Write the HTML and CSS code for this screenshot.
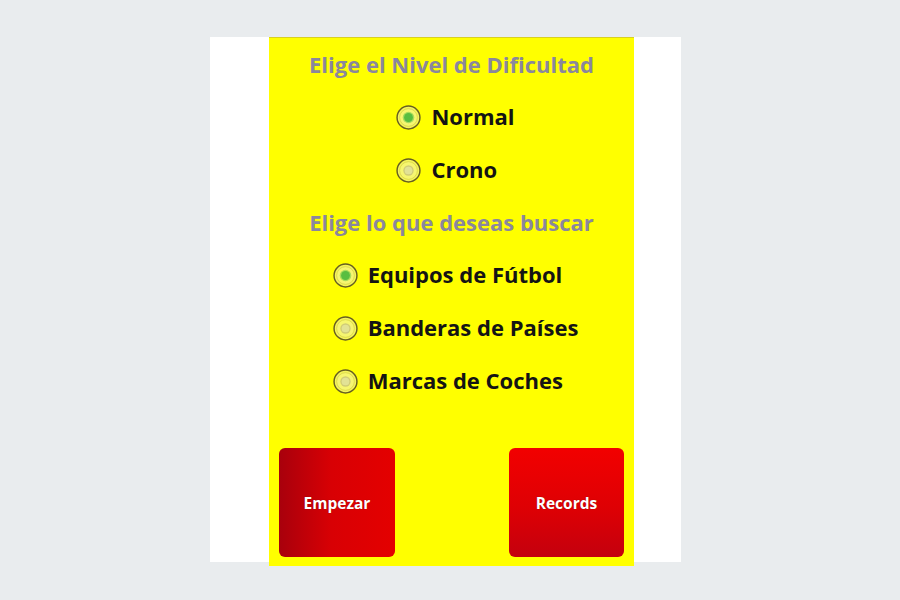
FILE: index.html
```html
<!DOCTYPE html>
<html lang="es">
<head>
<meta charset="utf-8">
<title>Nivel de Dificultad</title>
<link rel="stylesheet" href="styles.css">
</head>
<body>
<div class="panel">
  <div class="screen">
    <div class="heading">Elige el Nivel de Dificultad</div>
    <div class="group">
      <div class="option">
        <svg class="radio" viewBox="0 0 26 26"><circle cx="13" cy="13" r="11.9" fill="#f4f45c" stroke="#665e22" stroke-width="1.5"/><circle cx="13" cy="13" r="9.2" fill="#f6f670" stroke="#d6d248" stroke-width="0.8"/><circle cx="13" cy="13" r="6" fill="#a8dc5c"/><circle cx="13" cy="13" r="4.6" fill="#58be40"/></svg>
        <span class="label">Normal</span>
      </div>
      <div class="option">
        <svg class="radio" viewBox="0 0 26 26"><circle cx="13" cy="13" r="11.9" fill="#f4f45c" stroke="#665e22" stroke-width="1.5"/><circle cx="13" cy="13" r="9.2" fill="#f6f670" stroke="#d6d248" stroke-width="0.8"/><circle cx="13" cy="13" r="5.4" fill="#d0cc78"/><circle cx="13" cy="13" r="4" fill="#e2e296"/></svg>
        <span class="label">Crono</span>
      </div>
    </div>
    <div class="heading">Elige lo que deseas buscar</div>
    <div class="group">
      <div class="option">
        <svg class="radio" viewBox="0 0 26 26"><circle cx="13" cy="13" r="11.9" fill="#f4f45c" stroke="#665e22" stroke-width="1.5"/><circle cx="13" cy="13" r="9.2" fill="#f6f670" stroke="#d6d248" stroke-width="0.8"/><circle cx="13" cy="13" r="6" fill="#a8dc5c"/><circle cx="13" cy="13" r="4.6" fill="#58be40"/></svg>
        <span class="label">Equipos de Fútbol</span>
      </div>
      <div class="option">
        <svg class="radio" viewBox="0 0 26 26"><circle cx="13" cy="13" r="11.9" fill="#f4f45c" stroke="#665e22" stroke-width="1.5"/><circle cx="13" cy="13" r="9.2" fill="#f6f670" stroke="#d6d248" stroke-width="0.8"/><circle cx="13" cy="13" r="5.4" fill="#d0cc78"/><circle cx="13" cy="13" r="4" fill="#e2e296"/></svg>
        <span class="label">Banderas de Países</span>
      </div>
      <div class="option">
        <svg class="radio" viewBox="0 0 26 26"><circle cx="13" cy="13" r="11.9" fill="#f4f45c" stroke="#665e22" stroke-width="1.5"/><circle cx="13" cy="13" r="9.2" fill="#f6f670" stroke="#d6d248" stroke-width="0.8"/><circle cx="13" cy="13" r="5.4" fill="#d0cc78"/><circle cx="13" cy="13" r="4" fill="#e2e296"/></svg>
        <span class="label">Marcas de Coches</span>
      </div>
    </div>
    <div class="buttons">
      <div class="btn btn-start">Empezar</div>
      <div class="btn btn-records">Records</div>
    </div>
  </div>
</div>
</body>
</html>
```
FILE: styles.css
```css
html, body {
  margin: 0;
  padding: 0;
}
body {
  background: #e9ecee;
  width: 900px;
  height: 600px;
  overflow: hidden;
  padding-top: 37px;
  box-sizing: border-box;
  font-family: "Open Sans", "DejaVu Sans", sans-serif;
}
.panel {
  margin-left: 210px;
  width: 471px;
  height: 525px;
  background: #ffffff;
  padding-left: 59px;
  box-sizing: border-box;
}
.screen {
  width: 365px;
  height: 529px;
  background: #ffff00;
  border-top: 1px solid #d8d020;
  box-sizing: border-box;
  display: flex;
  flex-direction: column;
  align-items: center;
  padding-top: 1px;
  padding-bottom: 9px;
}
.heading {
  height: 52px;
  box-sizing: border-box;
  padding-bottom: 2px;
  display: flex;
  align-items: center;
  justify-content: center;
  font-size: 22px;
  font-weight: 700;
  color: #8a879d;
}
.group {
  display: flex;
  flex-direction: column;
  align-items: flex-start;
  margin-left: 8px;
}
.option {
  height: 53px;
  display: flex;
  align-items: center;
  gap: 10px;
}
.radio {
  width: 25px;
  height: 25px;
  display: block;
}
.label {
  font-size: 22px;
  font-weight: 700;
  color: #141414;
  padding-bottom: 3px;
}
.buttons {
  margin-top: auto;
  width: 100%;
  display: flex;
  justify-content: space-between;
  padding: 0 10px;
  box-sizing: border-box;
}
.btn {
  width: 116px;
  height: 109px;
  border-radius: 6px;
  display: flex;
  align-items: center;
  justify-content: center;
  color: #ffffff;
  font-size: 15.5px;
  font-weight: 700;
  text-shadow: 0 0 1px rgba(80,0,0,0.6);
}
.btn-start {
  background: linear-gradient(to right, #a8000c 0%, #d80004 45%, #e40000 100%);
}
.btn-records {
  width: 115px;
  background: linear-gradient(to bottom, #f20000 0%, #de0004 55%, #c4000e 100%);
}
```
